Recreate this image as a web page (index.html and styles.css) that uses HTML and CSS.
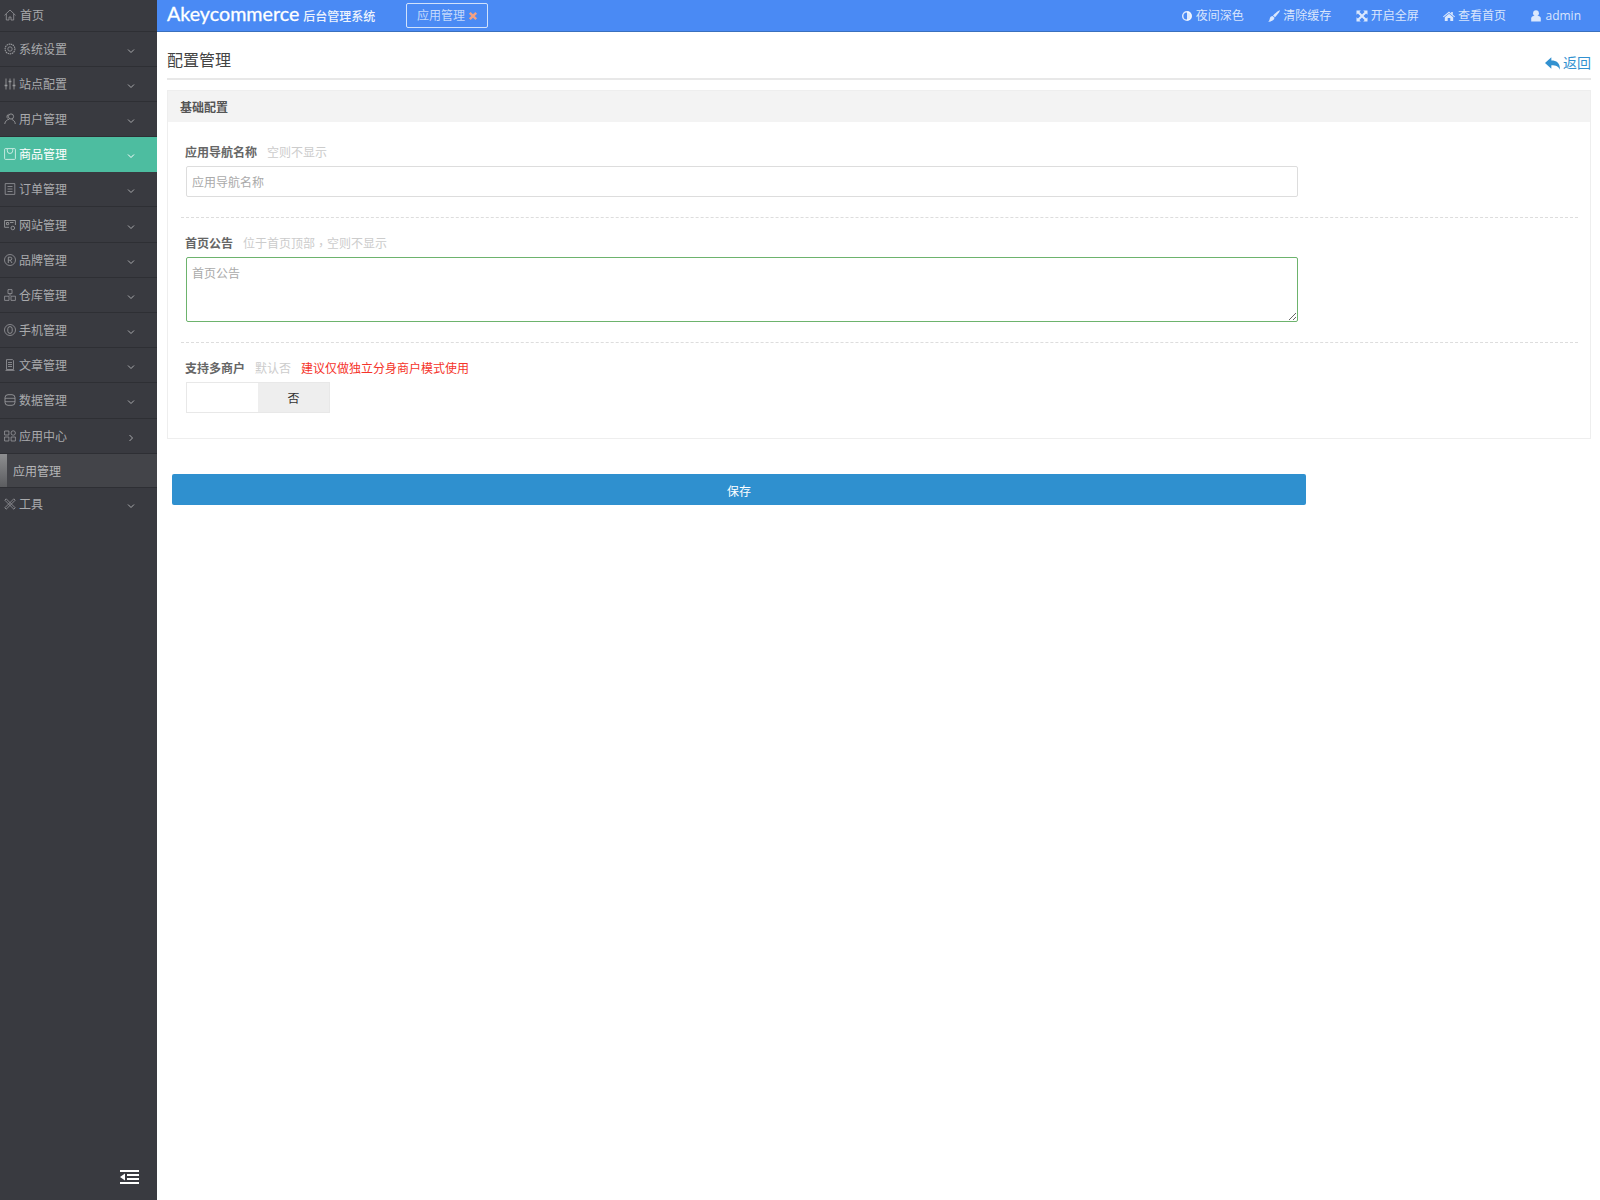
FILE: index.html
```html
<!DOCTYPE html>
<html lang="zh">
<head>
<meta charset="utf-8">
<title>配置管理</title>
<link rel="stylesheet" href="styles.css">
</head>
<body>
<svg class="defs" width="0" height="0" aria-hidden="true">
  <symbol id="down" viewBox="0 0 8 6"><path d="M1 1.500 4 4.500 7 1.500" fill="none" stroke="currentColor"/></symbol>
  <symbol id="right" viewBox="0 0 6 8"><path d="M1.500 1 4.500 4 1.500 7" fill="none" stroke="currentColor"/></symbol>
</svg>
<aside class="side">
  <a class="nav nav-home"><svg class="ic" viewBox="0 0 12 12"><path d="M.5 6.300 6 1l5.500 5.300M2.300 5v6h2.700V8h2v3h2.700V5" fill="none" stroke="currentColor" stroke-width=".8"/></svg><span>首页</span></a>
  <a class="nav"><svg class="ic" viewBox="0 0 12 12"><circle cx="6" cy="6" r="4.900" fill="none" stroke="currentColor" stroke-width="1.100" stroke-dasharray="1.500 .6"/><circle cx="6" cy="6" r="2.200" fill="none" stroke="currentColor" stroke-width=".8"/></svg><span>系统设置</span><svg class="ch"><use href="#down"/></svg></a>
  <a class="nav"><svg class="ic" viewBox="0 0 12 12"><path d="M2 .5v11M6 .5v11M10 .5v11" stroke="currentColor" stroke-width=".9"/><path d="M.6 7.500h2.800M4.600 3.500h2.800M8.600 7.500h2.800" stroke="currentColor" stroke-width="1.500"/></svg><span>站点配置</span><svg class="ch"><use href="#down"/></svg></a>
  <a class="nav"><svg class="ic" viewBox="0 0 12 12"><circle cx="7" cy="3.500" r="2.600" fill="none" stroke="currentColor" stroke-width=".9"/><path d="M.7 11C1.200 8 3.200 6.500 5.300 6.200M7.800 6.500c2 .5 3.200 2.200 3.500 4.500M4.500 1.300C3 1.800 2.500 4 3.500 5.400" fill="none" stroke="currentColor" stroke-width=".9"/></svg><span>用户管理</span><svg class="ch"><use href="#down"/></svg></a>
  <a class="nav nav-active"><svg class="ic" viewBox="0 0 12 12"><path d="M1.500.6h9a.9.9 0 0 1 .9.900v9a.9.9 0 0 1-.9.900h-9a.9.900 0 0 1-.9-.9v-9a.9.900 0 0 1 .9-.9zM3.300 1v1.800a2.700 2.700 0 0 0 5.400 0V1" fill="none" stroke="currentColor" stroke-width=".8"/></svg><span>商品管理</span><svg class="ch"><use href="#down"/></svg></a>
  <a class="nav"><svg class="ic" viewBox="0 0 12 12"><path d="M1.200.6h9.600v10.800H1.200zM3.500 3.500h5M3.500 6h5M3.500 8.500h5" fill="none" stroke="currentColor" stroke-width=".8"/></svg><span>订单管理</span><svg class="ch"><use href="#down"/></svg></a>
  <a class="nav"><svg class="ic" viewBox="0 0 12 12"><path d="M5 8.300H.6V1.500h10.800v4.500M2.500 3.500h2.200v2.200H2.500zM6 3.500h3.500" fill="none" stroke="currentColor" stroke-width=".9"/><circle cx="8.800" cy="9" r="1.800" fill="none" stroke="currentColor" stroke-width=".9"/></svg><span>网站管理</span><svg class="ch"><use href="#down"/></svg></a>
  <a class="nav"><svg class="ic" viewBox="0 0 12 12"><circle cx="6" cy="6" r="5.500" fill="none" stroke="currentColor" stroke-width=".8"/><path d="M4.300 9V3.200h2a1.500 1.500 0 0 1 0 3h-2M6.200 6.200 8 9" fill="none" stroke="currentColor" stroke-width=".9"/></svg><span>品牌管理</span><svg class="ch"><use href="#down"/></svg></a>
  <a class="nav"><svg class="ic" viewBox="0 0 12 12"><path d="M4 .6h4v4H4zM.6 7.200h4.400v4.200H.6zM7 7.200h4.400v4.200H7zM6 4.600V7" fill="none" stroke="currentColor" stroke-width=".8"/></svg><span>仓库管理</span><svg class="ch"><use href="#down"/></svg></a>
  <a class="nav"><svg class="ic" viewBox="0 0 12 12"><circle cx="6" cy="6" r="5.500" fill="none" stroke="currentColor" stroke-width=".8"/><rect x="3.800" y="2.600" width="4.400" height="6.800" rx="2.200" fill="none" stroke="currentColor" stroke-width=".9"/></svg><span>手机管理</span><svg class="ch"><use href="#down"/></svg></a>
  <a class="nav"><svg class="ic" viewBox="0 0 12 12"><path d="M2.500.6h6l1 1V10.500h-7zM4 3.500h4M4 5.500h4M4 7.500h4M1.500 11.400h9" fill="none" stroke="currentColor" stroke-width=".8"/></svg><span>文章管理</span><svg class="ch"><use href="#down"/></svg></a>
  <a class="nav"><svg class="ic" viewBox="0 0 12 12"><rect x="1" y=".7" width="10" height="10.600" rx="3" fill="none" stroke="currentColor" stroke-width=".9"/><path d="M1 4.300h10M1 7.700h10" stroke="currentColor" stroke-width=".8"/></svg><span>数据管理</span><svg class="ch"><use href="#down"/></svg></a>
  <a class="nav"><svg class="ic" viewBox="0 0 12 12"><path d="M.6 1h4.300v4H.6zM.6 7h4.300v4H.6zM7.100 7h4.300v4H7.100z" fill="none" stroke="currentColor" stroke-width=".8"/><circle cx="9.200" cy="3" r="2.200" fill="none" stroke="currentColor" stroke-width=".8"/></svg><span>应用中心</span><svg class="ch ch-right"><use href="#right"/></svg></a>
  <a class="nav-sub"><span>应用管理</span></a>
  <a class="nav nav-last"><svg class="ic" viewBox="0 0 12 12"><path d="M2.200.8 11.200 9.800 9.800 11.200.8 2.200zM9.800.8 11.200 2.200 2.200 11.200.8 9.800z" fill="none" stroke="currentColor" stroke-width=".8"/></svg><span>工具</span><svg class="ch"><use href="#down"/></svg></a>
  <div class="side-foot"><svg class="fold" viewBox="0 0 19 14"><path d="M0 0h19v2H0zM0 12h19v2H0zM7 4h12v2H7zM7 8h12v2H7zM5 3.500v7L0 7z" fill="#fff"/></svg></div>
</aside>
<div class="main">
  <header class="top">
    <div class="brand">Akeycommerce<small>后台管理系统</small></div>
    <div class="tag">应用管理<svg class="tag-x" viewBox="0 0 10 10"><path d="M1.800 1.800 8.200 8.200M8.200 1.800 1.800 8.200" stroke="#f3a183" stroke-width="2.400"/></svg></div>
    <nav class="tools">
      <a class="tool-item"><svg viewBox="0 0 12 12"><circle cx="6" cy="6" r="4.300" fill="none" stroke="currentColor" stroke-width="1.500"/><path d="M6 1.500a4.500 4.500 0 0 1 0 9z" fill="currentColor"/></svg>夜间深色</a>
      <a class="tool-item"><svg viewBox="0 0 12 12"><path d="M12 .2c.3.500-2.800 5-5 7L5 5.400C7 3.200 11.500-.2 12 .2zM4.500 6l2 1.800C6.200 10.500 3 12 0 11.600c1.700-.8 1.400-1.800 1.800-3.200C2.200 7 3.400 6.100 4.500 6z" fill="currentColor"/></svg>清除缓存</a>
      <a class="tool-item"><svg viewBox="0 0 12 12"><path d="M.5.500h4.300L3.400 1.900 6 4.500l2.600-2.600L7.200.5h4.300v4.300l-1.400-1.400L7.500 6l2.600 2.600 1.400-1.400v4.300H7.200l1.400-1.400L6 7.500l-2.600 2.600 1.400 1.400H.5V7.200l1.400 1.400L4.500 6 1.900 3.400.5 4.800z" fill="currentColor"/></svg>开启全屏</a>
      <a class="tool-item"><svg viewBox="0 0 12 12"><path d="M6 1.500 0 6.500l.6.700L6 2.900l5.400 4.300.6-.7-2.200-1.800V2H8.200v1.600zM1.800 7.200 6 3.800l4.200 3.400v3.800H7.300V8H4.700v3H1.800z" fill="currentColor"/></svg>查看首页</a>
      <a class="tool-item"><svg viewBox="0 0 12 12"><circle cx="6" cy="3.200" r="2.900" fill="currentColor"/><path d="M1.200 11.500V8.500C1.200 7 2.300 6 3.600 6h4.800c1.300 0 2.400 1 2.400 2.500v3z" fill="currentColor"/></svg>admin</a>
    </nav>
  </header>
  <main class="content">
    <div class="page-head">
      <h1>配置管理</h1>
      <a class="back"><svg viewBox="0.5 0.5 13 11"><path d="M6 .5v3c4.500 0 7.500 2 7.500 8-1-3-3.500-4-7.500-4v3L.5 5.500z" fill="currentColor"/></svg>返回</a>
    </div>
    <section class="panel">
      <h2 class="panel-title">基础配置</h2>
      <div class="panel-body">
        <div class="field field-first">
          <label class="label"><b>应用导航名称</b><i>空则不显示</i></label>
          <input class="input" type="text" placeholder="应用导航名称">
        </div>
        <div class="field field-area">
          <label class="label"><b>首页公告</b><i>位于首页顶部<span class="comma" lang="zh-Hant">，</span>空则不显示</i></label>
          <textarea class="input area" placeholder="首页公告"></textarea>
        </div>
        <div class="field field-last">
          <label class="label"><b>支持多商户</b><i>默认否</i><em>建议仅做独立分身商户模式使用</em></label>
          <div class="switch"><span class="sw-on"></span><span class="sw-off">否</span></div>
        </div>
      </div>
    </section>
    <button class="save" type="button">保存</button>
  </main>
</div>
</body>
</html>
```
FILE: styles.css
```css
* { box-sizing: border-box; }
html, body { height: 100%; }
body {
  margin: 0;
  display: flex;
  min-height: 1200px;
  background: #fff;
  font: 12px/1.5 "Open Sans", "Noto Sans CJK SC", sans-serif;
  color: #555;
}
.defs { position: absolute; }
.side {
  width: 157px;
  flex: none;
  background: #393a40;
  color: #a9aaad;
  display: flex;
  flex-direction: column;
}
.nav {
  height: 35.2px;
  flex: none;
  display: flex;
  align-items: center;
  padding: 2px 0 0 4px;
  border-bottom: 1px solid #2e2f34;
}
.nav-home { height: 31.5px; }
.nav-home span { margin-left: 1px; }
.nav-active { background: #4dbda0; color: #fff; border-bottom-color: #4dbda0; }
.nav-last { border-bottom: 0; padding-top: 0; }
.ic { width: 12px; height: 12px; flex: none; margin: -2px 3px 0 0; opacity: .85; }
.nav span { white-space: nowrap; }
.ch { width: 8px; height: 6px; margin: 2px 22px 0 auto; flex: none; }
.ch-right { width: 6px; height: 8px; margin-right: 23px; }
.nav-sub {
  height: 34px;
  flex: none;
  display: flex;
  align-items: center;
  padding: 3px 0 0 13px;
  background: linear-gradient(to bottom, #8d8e90, #5c5d60) 0 0 / 7px 100% no-repeat, #434449;
  border-bottom: 1px solid #2e2f34;
  color: #b5b6b8;
}
.side-foot { margin-top: auto; display: flex; justify-content: flex-end; padding: 0 18px 16px 0; }
.fold { width: 19px; height: 14px; }
.main { flex: 1; min-width: 0; display: flex; flex-direction: column; }
.top {
  height: 32px;
  flex: none;
  background: #4a8af4;
  border-bottom: 1px solid #3a70bd;
  display: flex;
  align-items: center;
  padding-left: 10px;
  color: #fff;
}
.brand { font: 400 19.7px/30px Lato, "Noto Sans CJK SC", sans-serif; white-space: nowrap; width: 239px; -webkit-text-stroke: .3px #fff; }
.brand small { font-size: 12px; font-weight: 500; margin-left: 4px; opacity: .9; -webkit-text-stroke: 0; }
.tag {
  height: 25px;
  width: 82px;
  border: 1px solid rgba(255,255,255,.75);
  border-radius: 2px;
  display: flex;
  align-items: center;
  padding-left: 10px;
  color: rgba(255,255,255,.7);
}
.tag-x { width: 10px; height: 10px; margin-left: 3px; }
.tools { margin-left: auto; display: flex; gap: 24.4px; padding-right: 19px; color: rgba(255,255,255,.8); }
.tool-item { display: flex; align-items: center; gap: 3px; }
.tool-item svg { width: 12px; height: 12px; }
.content { padding: 0 9px 0 10px; }
.page-head {
  height: 48px;
  display: flex;
  justify-content: space-between;
  align-items: flex-end;
  border-bottom: 2px solid #e8e8e8;
  padding-bottom: 6px;
}
h1 { margin: 0; font-size: 16px; font-weight: 400; color: #444; line-height: 24px; }
.back { display: flex; align-items: center; gap: 3px; font-size: 14px; line-height: 18px; color: #3291d0; }
.back svg { width: 15px; height: 13px; }
.panel { margin-top: 10px; border: 1px solid #eee; height: 349px; }
.panel-title {
  margin: 0;
  height: 31px;
  padding-left: 12px;
  background: #f3f3f3;
  font-size: 12px;
  font-weight: 700;
  line-height: 33px;
  color: #555;
}
.panel-body { padding: 0 12px 0 13px; }
.field { padding: 17px 0 0 5px; height: 125px; border-bottom: 1px dashed #ddd; }
.field .input { margin-top: 4px; }
.field-first { padding-top: 22px; height: 96px; }
.field-last { height: auto; border-bottom: 0; padding-top: 17px; }
.label { display: block; height: 18px; line-height: 18px; margin-left: -1px; white-space: nowrap; }
.label b { color: #666; }
.label i { font-style: normal; color: #ccc; margin-left: 10px; }
.label em { font-style: normal; color: #f5332a; margin-left: 10px; }
.comma { display: inline-block; font-family: "Noto Sans CJK TC", sans-serif; line-height: 1; transform: translateY(2px); }
.input {
  display: block;
  width: 1112px;
  height: 31px;
  padding: 2px 5px 0;
  border: 1px solid #ddd;
  border-radius: 2px;
  font: inherit;
  color: #555;
  outline: 0;
  background: #fff;
}
.input::placeholder { color: #aaa; opacity: 1; }
.area { height: 65px; padding: 7px 5px 0; border-color: #6db36d; resize: vertical; }
.switch { width: 144px; height: 31px; margin-top: 4px; display: flex; border: 1px solid #e8e8e8; }
.sw-on { width: 71px; background: #fff; }
.sw-off { flex: 1; display: flex; align-items: center; justify-content: center; padding-top: 2px; background: #eee; color: #333; }
.save {
  display: block;
  width: 1134px;
  height: 31px;
  margin: 35px 0 0 5px;
  padding: 4px 0 0;
  border: 0;
  border-radius: 2px;
  background: #2f90cf;
  color: #fff;
  font: inherit;
}
```
